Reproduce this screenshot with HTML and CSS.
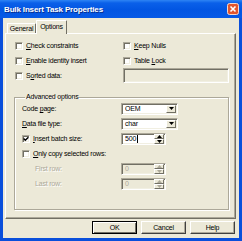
FILE: index.html
```html
<!DOCTYPE html>
<html>
<head>
<meta charset="utf-8">
<link rel="stylesheet" href="styles.css">
</head>
<body>
<div class="window">
  <div class="titlebar">
    <span class="title">Bulk Insert Task Properties</span>
    <span class="close">
      <svg width="12" height="12" viewBox="0 0 12 12"><rect x="0.5" y="0.5" width="11" height="11" rx="2" fill="#E2562E" stroke="#F4D8CC"/><path d="M3.5 3.5 L8.5 8.5 M8.5 3.5 L3.5 8.5" stroke="#fff" stroke-width="1.6"/></svg>
    </span>
  </div>
  <div class="client">
    <div class="tabs">
      <div class="tab">General</div>
      <div class="tab active">Options</div>
    </div>
    <div class="panel">
      <div class="opts">
        <label class="chk"><span class="box"></span><span><u>C</u>heck constraints</span></label>
        <label class="chk"><span class="box"></span><span><u>K</u>eep Nulls</span></label>
        <label class="chk"><span class="box"></span><span><u>E</u>nable identity insert</span></label>
        <label class="chk"><span class="box"></span><span>Table <u>L</u>ock</span></label>
        <label class="chk"><span class="box"></span><span>S<u>o</u>rted data:</span></label>
        <div class="field wide disabled"></div>
      </div>
      <fieldset class="group">
        <legend>Advanced options</legend>
        <div class="adv">
          <span class="lbl">Code <u>p</u>age:</span>
          <div class="field select"><span class="val">OEM</span><span class="drop"><svg width="5" height="3" viewBox="0 0 5 3"><path d="M0 0H5L2.5 3Z" fill="#000"/></svg></span></div>
          <span class="lbl"><u>D</u>ata file type:</span>
          <div class="field select"><span class="val">char</span><span class="drop"><svg width="5" height="3" viewBox="0 0 5 3"><path d="M0 0H5L2.5 3Z" fill="#000"/></svg></span></div>
          <label class="chk"><span class="box checked"><svg width="6" height="6" viewBox="0 0 6 6"><path d="M0.6 2.6 L2.3 4.3 L5.4 1.2" stroke="#000" stroke-width="1.4" fill="none"/></svg></span><span><u>I</u>nsert batch size:</span></label>
          <div class="field spin"><span class="val">500<span class="caret"></span></span><span class="spinbtns"><span class="sb"><svg width="5" height="3" viewBox="0 0 5 3"><path d="M0 3H5L2.5 0Z" fill="#000"/></svg></span><span class="sb"><svg width="5" height="3" viewBox="0 0 5 3"><path d="M0 0H5L2.5 3Z" fill="#000"/></svg></span></span></div>
          <label class="chk span2"><span class="box"></span><span><u>O</u>nly copy selected rows:</span></label>
          <span class="lbl dis indent">First row:</span>
          <div class="field spin disabled"><span class="val">0</span><span class="spinbtns"><span class="sb"><svg width="5" height="3" viewBox="0 0 5 3"><path d="M0 3H5L2.5 0Z" fill="#ACA899"/></svg></span><span class="sb"><svg width="5" height="3" viewBox="0 0 5 3"><path d="M0 0H5L2.5 3Z" fill="#ACA899"/></svg></span></span></div>
          <span class="lbl dis indent">Last row:</span>
          <div class="field spin disabled"><span class="val">0</span><span class="spinbtns"><span class="sb"><svg width="5" height="3" viewBox="0 0 5 3"><path d="M0 3H5L2.5 0Z" fill="#ACA899"/></svg></span><span class="sb"><svg width="5" height="3" viewBox="0 0 5 3"><path d="M0 0H5L2.5 3Z" fill="#ACA899"/></svg></span></span></div>
        </div>
      </fieldset>
    </div>
    <div class="buttons">
      <button class="btn default">OK</button>
      <button class="btn">Cancel</button>
      <button class="btn">Help</button>
    </div>
  </div>
</div>
</body>
</html>
```
FILE: styles.css
```css
* { box-sizing: border-box; }
html, body { margin: 0; padding: 0; background: #fff; }
body { font-family: "Liberation Sans", Arial, sans-serif; font-size: 7px; letter-spacing: -0.2px; color: #000; }

.window {
  width: 242px;
  height: 241px;
  background: #0A4FDB;
  display: flex;
  flex-direction: column;
  overflow: hidden;
}
.titlebar {
  height: 18px;
  flex: none;
  display: flex;
  align-items: center;
  justify-content: space-between;
  padding: 0 3px 0 4px;
  background: linear-gradient(#2E84F4 0, #0A60E9 3px, #0255E2 55%, #0659E6 100%);
}
.title {
  color: #fff;
  font-weight: bold;
  font-size: 8px;
  letter-spacing: -0.15px;
  text-shadow: 1px 1px 0 #0A2F8C;
}
.close { display: flex; }

.client {
  flex: 1;
  margin: 0 3px 3px;
  background: #ECE9D8;
  padding: 2px 3px 4px 2px;
  display: flex;
  flex-direction: column;
}

.tabs {
  display: flex;
  align-items: flex-end;
  height: 13px;
  padding-left: 2px;
  position: relative;
  z-index: 1;
}
.tab {
  height: 10px;
  width: 29px;
  display: flex;
  align-items: center;
  justify-content: center;
  border: 1px solid;
  border-color: #fff #716F64 transparent #fff;
  border-bottom: none;
  background: #ECE9D8;
  border-radius: 1px 1px 0 0;
}
.tab.active {
  height: 14px;
  width: 31px;
  margin-bottom: -1px;
  padding-bottom: 2px;
}

.panel {
  height: 186px;
  border: 1px solid;
  border-color: #fff #716F64 #716F64 #fff;
  box-shadow: inset -1px -1px 0 #ACA899;
  padding: 4px 0 0 9px;
}

.opts {
  display: grid;
  grid-template-columns: 108px 106px;
  grid-auto-rows: 15px;
  align-items: center;
}

.chk {
  display: flex;
  align-items: center;
  white-space: nowrap;
}
.box {
  width: 8px;
  height: 8px;
  flex: none;
  margin-right: 3px;
  background: #fff;
  border: 1px solid;
  border-color: #ACA899 #fff #fff #ACA899;
  box-shadow: inset 1px 1px 0 #716F64, inset -1px -1px 0 #F1EFE2;
  display: flex;
  align-items: center;
  justify-content: center;
}
.box svg { display: block; }

.field {
  height: 12px;
  background: #fff;
  border: 1px solid;
  border-color: #ACA899 #fff #fff #ACA899;
  box-shadow: inset 1px 1px 0 #716F64, inset -1px -1px 0 #F1EFE2;
  display: flex;
  align-items: center;
}
.field.wide { height: 15px; width: 106px; }
.field.disabled { background: #ECE9D8; }

.group {
  margin: 10px 0 0 -1px;
  padding: 0 0 0 7px;
  width: 215px;
  height: 117px;
  border: 1px solid #ACA899;
  box-shadow: 1px 1px 0 #fff, inset 1px 1px 0 #fff;
}
.group legend {
  padding: 0 1px;
  margin-left: 3px;
  line-height: 8px;
}

.adv {
  display: grid;
  grid-template-columns: 99px 57px;
  grid-auto-rows: 15px;
  align-items: center;
}
.span2 { grid-column: 1 / span 2; }
.lbl { white-space: nowrap; }
.indent { padding-left: 13px; }
.dis { color: #ACA899; text-shadow: 1px 1px 0 #fff; }

.select { width: 57px; padding: 0 1px 0 3px; justify-content: space-between; }
.val { flex: 1; display: flex; align-items: center; line-height: 8px; }
.drop {
  width: 10px;
  height: 8px;
  flex: none;
  background: #ECE9D8;
  border: 1px solid;
  border-color: #fff #716F64 #716F64 #fff;
  display: flex;
  align-items: center;
  justify-content: center;
}
.drop svg, .sb svg { display: block; }

.spin { width: 45px; padding: 0 1px 0 3px; }
.caret { display: inline-block; width: 1px; height: 8px; background: #000; margin-left: 1px; }
.spinbtns { display: flex; flex-direction: column; flex: none; }
.sb {
  width: 10px;
  height: 5px;
  background: #ECE9D8;
  border: 1px solid;
  border-color: #fff #716F64 #716F64 #fff;
  display: flex;
  align-items: center;
  justify-content: center;
}
.spin.disabled .val { color: #ACA899; }

.buttons {
  display: flex;
  justify-content: flex-end;
  gap: 4px;
  margin-top: 2px;
  padding-right: 1px;
}
.btn {
  width: 45px;
  height: 13px;
  padding: 0;
  font-family: "Liberation Sans", Arial, sans-serif;
  font-size: 7px;
  letter-spacing: -0.2px;
  color: #000;
  background: #ECE9D8;
  border: 1px solid;
  border-color: #fff #404040 #404040 #fff;
  box-shadow: inset -1px -1px 0 #ACA899;
  border-radius: 0;
}
.btn.default {
  border: 1px solid #000;
  box-shadow: inset 1px 1px 0 #fff, inset -1px -1px 0 #716F64;
}
```
